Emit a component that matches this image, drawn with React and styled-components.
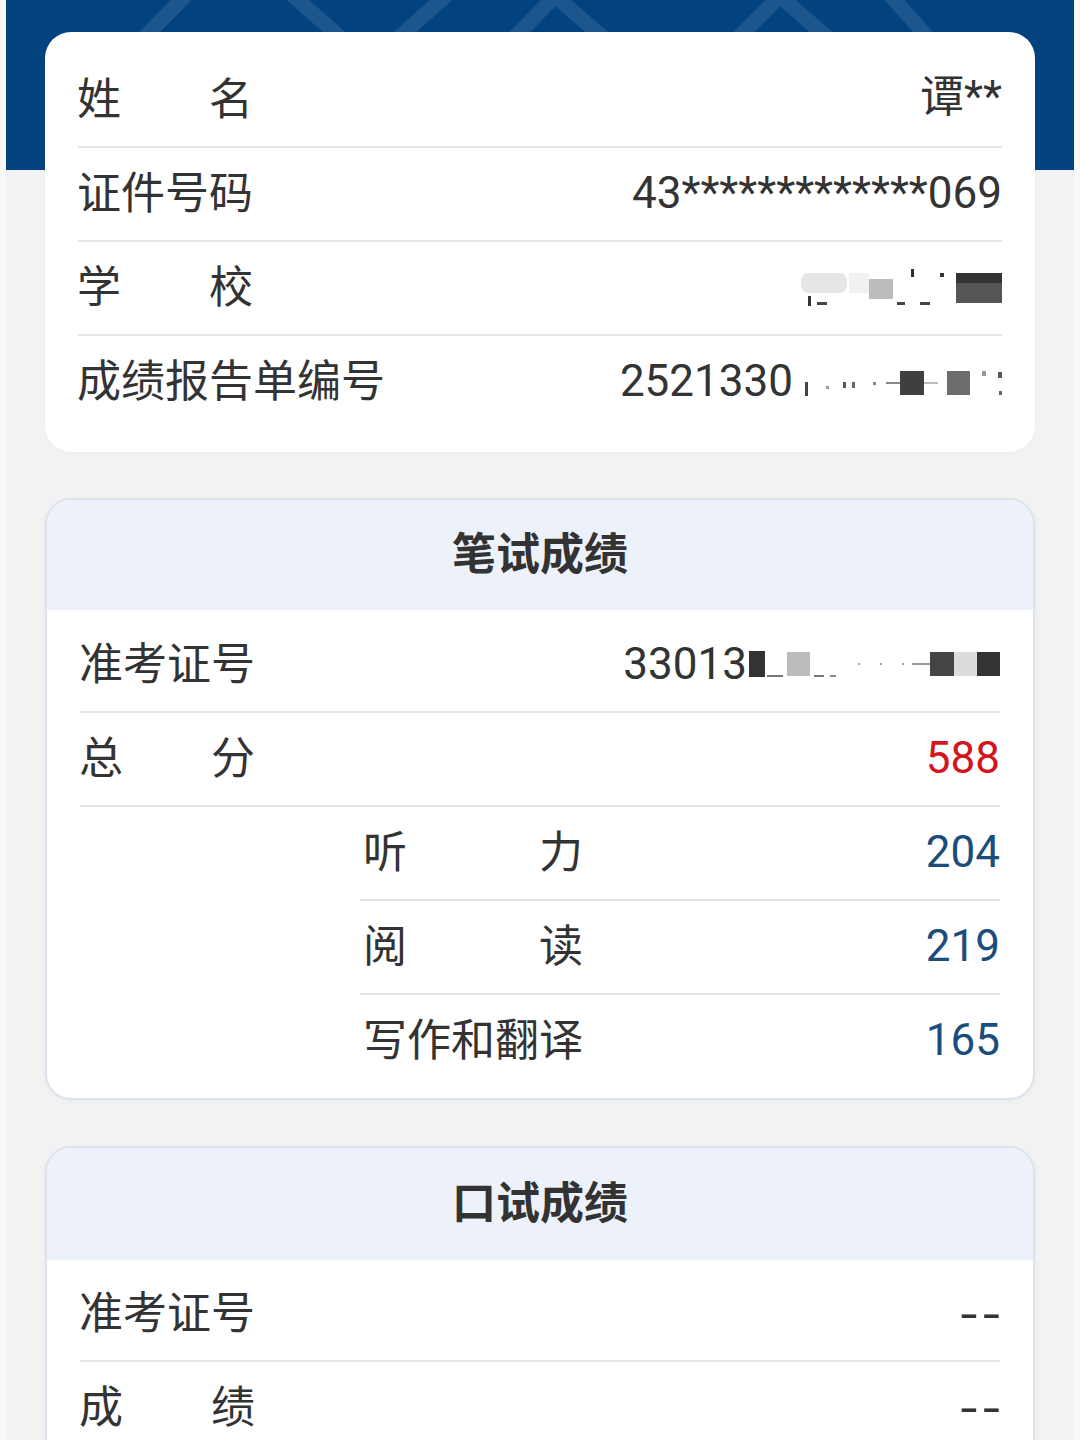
import React from "react";
import styled, { createGlobalStyle } from "styled-components";

const Global = createGlobalStyle`
  html, body { margin: 0; padding: 0; background: #f7f7f7; }
  body { font-family: Roboto, "Noto Sans CJK SC", sans-serif; color: #333; }
`;

const Page = styled.div`
  position: relative;
  min-height: 1440px;
  overflow: hidden;
  background: linear-gradient(to right, #f8f8f8 6px, #f2f2f2 6px, #f2f2f2 1074px, #f8f8f8 1074px);
`;

const Banner = styled.div`
  position: absolute;
  top: 0;
  left: 6px;
  right: 6px;
  height: 170px;
  background: #02427f;
  overflow: hidden;
  svg { display: block; }
`;

const Stack = styled.div`
  position: relative;
  z-index: 1;
  display: flex;
  flex-direction: column;
  gap: 46px;
  padding: 32px 45px 40px;
`;

const InfoCard = styled.section`
  background: #fff;
  border-radius: 26px;
  padding: 22px 33px;
  box-shadow: 0 1px 3px rgba(0, 0, 0, 0.03);
`;

const ScoreCard = styled.section`
  background: #fff;
  border-radius: 26px;
  border: 2px solid #dbe3ee;
  overflow: hidden;
  box-shadow: 0 1px 4px rgba(40, 70, 120, 0.05);
`;

const CardHead = styled.h2`
  margin: 0;
  height: ${(p) => p.$h}px;
  box-sizing: border-box;
  padding-bottom: 8px;
  display: flex;
  align-items: center;
  justify-content: center;
  background: #edf2fa;
  font-family: "Noto Sans CJK SC", sans-serif;
  font-size: 44px;
  font-weight: 700;
  color: #333;
`;

const CardBody = styled.div`
  padding: ${(p) => p.$top}px 33px 9px;
`;

const Row = styled.div`
  height: 94px;
  box-sizing: border-box;
  display: flex;
  align-items: center;
  justify-content: space-between;
  font-size: 44px;
  line-height: 1;
  border-bottom: 2px solid ${(p) => (p.$last ? "transparent" : "#e4e4e4")};
`;

const SubList = styled.div`
  padding-left: 280px;
`;

const Label = styled.span`
  display: flex;
  justify-content: space-between;
  width: ${(p) => p.$em}em;
  padding-bottom: 9px;
  margin-left: ${(p) => p.$indent}px;
  font-family: "Noto Sans CJK SC", sans-serif;
  color: #333;
`;

const Value = styled.span`
  font-family: Roboto, "Noto Sans CJK SC", sans-serif;
  color: ${(p) => p.$color || "#333"};
  display: inline-flex;
  align-items: center;
  white-space: nowrap;
  padding-bottom: ${(p) => (p.$cjk ? 6 : 2)}px;
`;

const Dash = styled.span`
  font-family: "DejaVu Sans", sans-serif;
  font-size: 44px;
  letter-spacing: 2px;
  margin-right: -4px;
  color: #333;
  transform: scaleX(1.25);
  transform-origin: right center;
  display: inline-block;
`;

const Redact = styled.span`
  display: inline-flex;
  align-items: center;
  height: 44px;
`;

const Bit = styled.span`
  display: inline-block;
  flex: none;
  background: ${(p) => p.$c};
  width: ${(p) => p.$w}px;
  height: ${(p) => p.$h}px;
  margin-left: ${(p) => p.$ml || 0}px;
  transform: translateY(${(p) => p.$dy || 0}px);
  border-radius: ${(p) => p.$r || 0}px;
`;

function Lbl({ text, em, indent = -1 }) {
  return (
    <Label $em={em || Math.max(4, text.length)} $indent={indent}>
      {text.split("").map((ch, i) => (
        <span key={i}>{ch}</span>
      ))}
    </Label>
  );
}

function Bits({ items }) {
  return (
    <Redact>
      {items.map((b, i) => (
        <Bit key={i} $c={b[0]} $w={b[1]} $h={b[2]} $ml={b[3]} $dy={b[4]} $r={b[5]} />
      ))}
    </Redact>
  );
}

/* [color, width, height, marginLeft, translateY, radius] */
const school = [
  ["#333", 3, 10, 8, 14],
  ["#e6e6e6", 46, 20, -10, -4, 8],
  ["#444", 10, 3, -30, 16],
  ["#f1f1f1", 20, 20, 22, -4],
  ["#bcbcbc", 24, 20, 0, 2],
  ["#444", 8, 3, 4, 16],
  ["#2f2f2f", 3, 8, 6, -14],
  ["#444", 10, 3, 6, 16],
  ["#333", 4, 4, 10, -12],
  ["#333", 46, 12, 12, -8],
  ["#555", 46, 20, -46, 6],
];

const report = [
  ["#444", 3, 14, 12, 8],
  ["#999", 3, 3, 18, 6],
  ["#555", 3, 6, 14, 4],
  ["#666", 3, 6, 6, 4],
  ["#888", 3, 3, 18, 2],
  ["#888", 14, 2, 10, 2],
  ["#3f3f3f", 24, 24, 0, 2],
  ["#bbb", 14, 2, 0, 2],
  ["#6d6d6d", 23, 24, 9, 2],
  ["#999", 4, 5, 12, -8],
  ["#555", 4, 6, 12, -6],
  ["#666", 3, 4, -3, 12],
];

const ticket = [
  ["#333", 16, 26, 2, 0],
  ["#777", 16, 2, 2, 12],
  ["#bcbcbc", 23, 24, 4, 0],
  ["#777", 10, 2, 4, 12],
  ["#888", 6, 2, 6, 12],
  ["#aaa", 2, 2, 22, 0],
  ["#aaa", 2, 2, 20, 0],
  ["#aaa", 2, 2, 20, 0],
  ["#999", 18, 2, 8, 0],
  ["#444", 24, 24, 0, 0],
  ["#dcdcdc", 23, 24, 0, 0],
  ["#333", 23, 24, 0, 0],
];

export default function App() {
  return (
    <>
      <Global />
      <Page>
        <Banner>
          <svg width="1068" height="170" viewBox="6 0 1068 170">
            <g stroke="rgba(255,255,255,0.11)" strokeWidth="15" fill="none">
              <line x1="220" y1="-40" x2="142" y2="40" />
              <line x1="253" y1="-40" x2="343" y2="40" />
              <line x1="486" y1="-40" x2="396" y2="40" />
              <polyline points="512,40 555,-4 606,40" />
              <polyline points="736,40 780,-4 830,40" />
              <line x1="868" y1="-30" x2="930" y2="40" />
            </g>
          </svg>
        </Banner>
        <Stack>
          <InfoCard>
            <Row>
              <Lbl text="姓名" />
              <Value $cjk>谭**</Value>
            </Row>
            <Row>
              <Lbl text="证件号码" />
              <Value>43*************069</Value>
            </Row>
            <Row>
              <Lbl text="学校" />
              <Value>
                <Bits items={school} />
              </Value>
            </Row>
            <Row $last>
              <Lbl text="成绩报告单编号" />
              <Value>
                2521330
                <Bits items={report} />
              </Value>
            </Row>
          </InfoCard>

          <ScoreCard>
            <CardHead $h={110}>笔试成绩</CardHead>
            <CardBody $top={9}>
              <Row>
                <Lbl text="准考证号" />
                <Value>
                  33013
                  <Bits items={ticket} />
                </Value>
              </Row>
              <Row>
                <Lbl text="总分" />
                <Value $color="#d2161c">588</Value>
              </Row>
              <SubList>
                <Row>
                  <Lbl text="听力" em={5} indent={3} />
                  <Value $color="#1b4d7c">204</Value>
                </Row>
                <Row>
                  <Lbl text="阅读" em={5} indent={3} />
                  <Value $color="#1b4d7c">219</Value>
                </Row>
                <Row $last>
                  <Lbl text="写作和翻译" em={5} indent={3} />
                  <Value $color="#1b4d7c">165</Value>
                </Row>
              </SubList>
            </CardBody>
          </ScoreCard>

          <ScoreCard>
            <CardHead $h={112}>口试成绩</CardHead>
            <CardBody $top={8}>
              <Row>
                <Lbl text="准考证号" />
                <Value>
                  <Dash>--</Dash>
                </Value>
              </Row>
              <Row $last>
                <Lbl text="成绩" />
                <Value>
                  <Dash>--</Dash>
                </Value>
              </Row>
            </CardBody>
          </ScoreCard>
        </Stack>
      </Page>
    </>
  );
}
